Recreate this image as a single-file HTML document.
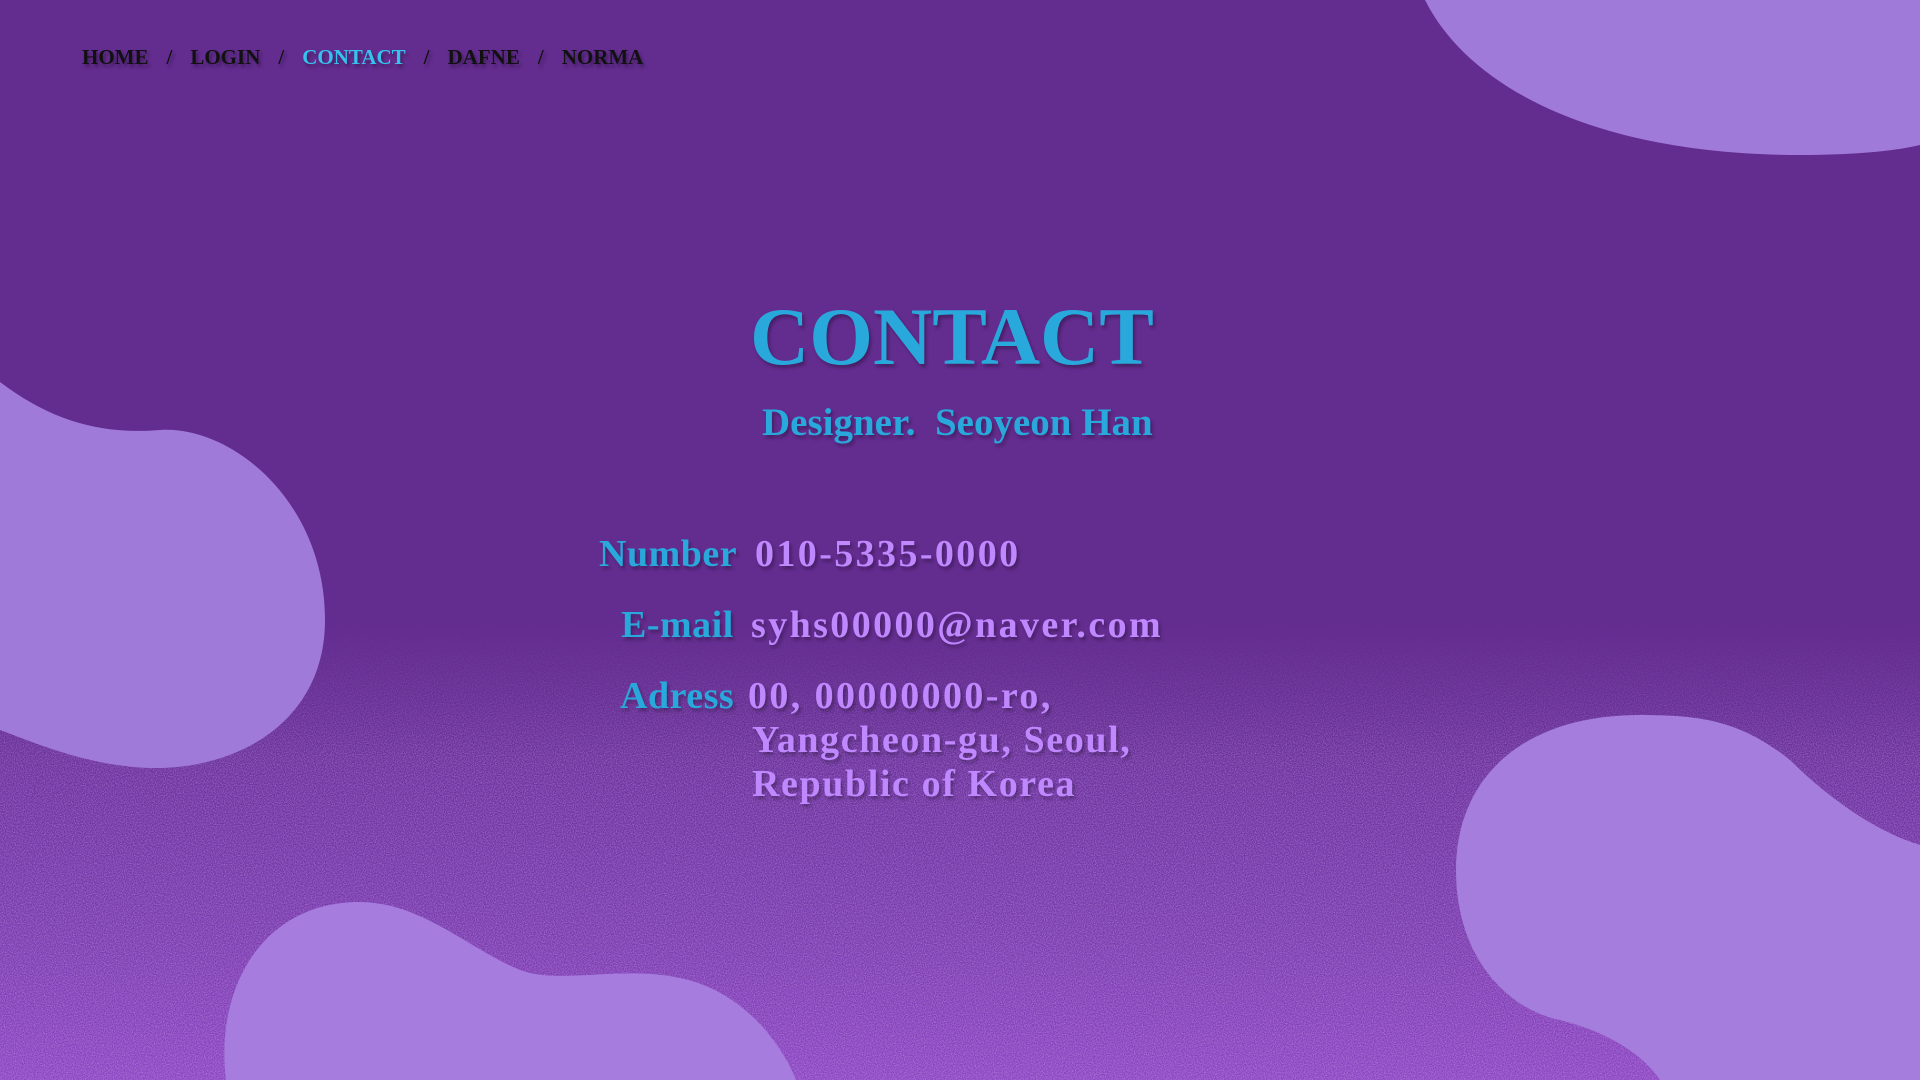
<!DOCTYPE html>
<html><head><meta charset="utf-8"><style>
html,body{margin:0;padding:0;width:1920px;height:1080px;overflow:hidden;background:#632c8f;}
body{position:relative;font-family:"Liberation Serif",serif;font-weight:bold;}
svg.bg{position:absolute;left:0;top:0;}
.nav{position:absolute;left:82px;top:45px;font-size:21px;color:#111;text-shadow:2px 3px 3px rgba(0,0,0,.35);white-space:nowrap;}
.nav span{display:inline-block;}
.nav .s{margin:0 18px;}
.nav .a{color:#35c3ee;}
.t{position:absolute;white-space:nowrap;text-shadow:2px 3px 3px rgba(0,0,0,.3);}
.title{left:750px;top:290px;font-size:82px;color:#29a8dc;}
.sub{left:762px;top:400px;font-size:39px;color:#29a8dc;}
.lab{color:#29a8dc;font-size:38px;letter-spacing:0.5px;}
.val{color:#c088ff;font-size:38px;letter-spacing:2.4px;}
</style></head><body>
<svg class="bg" width="1920" height="1080" viewBox="0 0 1920 1080">
<defs>
<linearGradient id="g" x1="0" y1="0" x2="0" y2="1">
<stop offset="0" stop-color="#632c8f" stop-opacity="0"/>
<stop offset="0.35" stop-color="#7236a8" stop-opacity="0.6"/>
<stop offset="1" stop-color="#8a45c0"/>
</linearGradient>
<filter id="n"><feTurbulence type="fractalNoise" baseFrequency="0.9" numOctaves="2" seed="3"/><feColorMatrix type="matrix" values="0 0 0 0 0.75  0 0 0 0 0.5  0 0 0 0 1  0 0 0 1.6 -0.55"/></filter>
<linearGradient id="m" x1="0" y1="0" x2="0" y2="1"><stop offset="0" stop-color="#fff" stop-opacity="0"/><stop offset="0.3" stop-color="#fff" stop-opacity="0.7"/><stop offset="1" stop-color="#fff" stop-opacity="0.8"/></linearGradient>
<mask id="mk"><rect x="0" y="620" width="1920" height="460" fill="url(#m)"/></mask>
</defs>
<rect x="0" y="620" width="1920" height="460" fill="url(#g)"/>
<rect x="0" y="620" width="1920" height="460" filter="url(#n)" mask="url(#mk)" opacity="0.7"/>
<g fill="#a07ad8">
<path d="M1425,0 C1470,90 1600,155 1800,155 C1860,155 1900,150 1920,145 L1920,0 Z"/>
<path d="M0,382 C50,420 100,435 160,430 C230,425 325,500 325,620 C325,720 240,770 150,768 C90,766 40,745 0,730 Z"/>
<path fill="#a67ddf" d="M226,1080 C215,990 260,905 355,902 C420,900 470,950 520,970 C560,985 620,965 680,978 C740,990 780,1040 796,1080 Z"/>
<path fill="#a57ddc" d="M1920,845 C1870,830 1820,790 1790,760 C1740,720 1700,715 1640,715 C1520,715 1456,780 1456,870 C1456,960 1510,1010 1560,1020 C1600,1030 1640,1050 1660,1080 L1920,1080 Z"/>
</g>
</svg>
<div class="nav"><span>HOME</span><span class="s">/</span><span>LOGIN</span><span class="s">/</span><span class="a">CONTACT</span><span class="s">/</span><span>DAFNE</span><span class="s">/</span><span>NORMA</span></div>
<div class="t title">CONTACT</div>
<div class="t sub">Designer.&nbsp; Seoyeon Han</div>
<div class="t lab" style="left:599px;top:532px">Number</div>
<div class="t val" style="left:755px;top:532px">010-5335-0000</div>
<div class="t lab" style="left:621px;top:603px">E-mail</div>
<div class="t val" style="left:751px;top:603px">syhs00000@naver.com</div>
<div class="t lab" style="left:620px;top:674px">Adress</div>
<div class="t val" style="left:748px;top:674px;line-height:44px">00, 00000000-ro,<br><span style="padding-left:4px;letter-spacing:1.6px">Yangcheon-gu, Seoul,</span><br><span style="padding-left:4px;letter-spacing:1.6px">Republic of Korea</span></div>
</body></html>
